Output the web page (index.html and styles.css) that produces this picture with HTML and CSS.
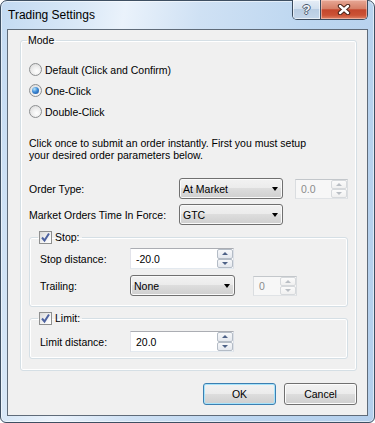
FILE: index.html
```html
<!DOCTYPE html>
<html lang="en">
<head>
    <meta charset="UTF-8">
    <meta name="viewport" content="width=device-width, initial-scale=1.0">
    <title>Trading Settings</title>
    <link rel="stylesheet" href="styles.css">
</head>
<body>
    <div class="window">
        <div class="titlebar">
            <span class="title">Trading Settings</span>
            <div class="caption-buttons">
                <span class="cap-btn help">?</span>
                <span class="cap-btn close">
                    <svg width="14" height="11" viewBox="0 0 14 11">
                        <path d="M3 2 L11 9 M11 2 L3 9" stroke="#4a2419" stroke-width="4.4" stroke-linecap="round"/>
                        <path d="M3 2 L11 9 M11 2 L3 9" stroke="#ffffff" stroke-width="2.4" stroke-linecap="round"/>
                    </svg>
                </span>
            </div>
        </div>

        <div class="client">
            <fieldset class="group mode">
                <legend>Mode</legend>
                <label class="radio"><span class="radio-box"></span>Default (Click and Confirm)</label>
                <label class="radio"><span class="radio-box checked"></span>One-Click</label>
                <label class="radio"><span class="radio-box"></span>Double-Click</label>

                <p class="desc">Click once to submit an order instantly. First you must setup<br>your desired order parameters below.</p>

                <div class="row first">
                    <span class="lbl lbl-wide">Order Type:</span>
                    <div class="combo">At Market<span class="arrow"></span></div>
                    <div class="spin disabled spin-price">
                        <span class="spin-value">0.0</span>
                        <span class="spin-btns"><span class="sb up"></span><span class="sb down"></span></span>
                    </div>
                </div>
                <div class="row">
                    <span class="lbl lbl-wide">Market Orders Time In Force:</span>
                    <div class="combo">GTC<span class="arrow"></span></div>
                </div>

                <fieldset class="group sub stop">
                    <legend><span class="check"><svg width="11" height="11" viewBox="0 0 11 11"><path d="M2 5.5 L4.5 8.5 L9 1.5" fill="none" stroke="#4d62a0" stroke-width="2"/></svg></span>Stop:</legend>
                    <div class="row">
                        <span class="lbl">Stop distance:</span>
                        <div class="spin">
                            <span class="spin-value">-20.0</span>
                            <span class="spin-btns"><span class="sb up"></span><span class="sb down"></span></span>
                        </div>
                    </div>
                    <div class="row">
                        <span class="lbl">Trailing:</span>
                        <div class="combo combo-trail">None<span class="arrow"></span></div>
                        <div class="spin disabled spin-trail">
                            <span class="spin-value">0</span>
                            <span class="spin-btns"><span class="sb up"></span><span class="sb down"></span></span>
                        </div>
                    </div>
                </fieldset>

                <fieldset class="group sub limit">
                    <legend><span class="check"><svg width="11" height="11" viewBox="0 0 11 11"><path d="M2 5.5 L4.5 8.5 L9 1.5" fill="none" stroke="#4d62a0" stroke-width="2"/></svg></span>Limit:</legend>
                    <div class="row">
                        <span class="lbl">Limit distance:</span>
                        <div class="spin">
                            <span class="spin-value">20.0</span>
                            <span class="spin-btns"><span class="sb up"></span><span class="sb down"></span></span>
                        </div>
                    </div>
                </fieldset>
            </fieldset>

            <div class="buttons">
                <button class="btn default">OK</button>
                <button class="btn">Cancel</button>
            </div>
        </div>
    </div>
</body>
</html>
```

FILE: styles.css
```css
body {
    margin: 0;
    background: #ffffff;
    font-family: "Liberation Sans", Arial, sans-serif;
    font-size: 10.5px;
    color: #000;
}
.window {
    box-sizing: border-box;
    width: 375px;
    height: 423px;
    display: flex;
    flex-direction: column;
    padding: 0 6px 6px 6px;
    border: 1px solid #3e4f62;
    border-radius: 7px 7px 6px 6px;
    background: linear-gradient(100deg, #c3daf2 0%, #d9e8f7 18%, #eaf2fb 28%, #cfe1f4 45%, #bcd6f0 70%, #b4cfec 100%);
    box-shadow: inset 0 0 0 1px rgba(255, 255, 255, 0.55);
}
.titlebar {
    height: 28px;
    flex: none;
    display: flex;
    justify-content: space-between;
    align-items: flex-start;
}
.title {
    font-size: 12px;
    line-height: 28px;
    padding-left: 1px;
    color: #000;
}
.caption-buttons {
    display: flex;
    margin-top: -1px;
    height: 19px;
    border: 1px solid #3b4b5e;
    border-top: none;
    border-radius: 0 0 5px 5px;
    overflow: hidden;
}
.cap-btn {
    display: flex;
    align-items: center;
    justify-content: center;
}
.help {
    width: 27px;
    border-right: 1px solid #3b4b5e;
    background: linear-gradient(#e6eef7 0%, #d3e0ee 45%, #b9cde3 50%, #c4d6ea 100%);
    box-shadow: inset 0 0 0 1px rgba(255, 255, 255, 0.6);
    color: #f4f7fb;
    font-weight: bold;
    font-size: 13px;
    text-shadow: 1px 0 #4a5a6d, -1px 0 #4a5a6d, 0 1px #4a5a6d, 0 -1px #4a5a6d;
}
.close {
    width: 46px;
    background: linear-gradient(#e7a896 0%, #d68068 45%, #c4472d 52%, #cb5235 80%, #de8468 100%);
    box-shadow: inset 0 0 0 1px rgba(255, 220, 210, 0.5);
}
.client {
    flex: 1;
    display: flex;
    flex-direction: column;
    background: #f0f0f0;
    border: 1px solid #5f6b79;
    padding: 3px 10px 0 12px;
}
.group {
    margin: 0;
    border: 1px solid #d5dfe5;
    border-radius: 3px;
    box-shadow: 0 0 0 1px #ffffff inset;
}
.group legend {
    line-height: 14px;
    padding: 0 2px 0 1px;
    margin-left: -2px;
    display: flex;
    align-items: center;
}
.mode {
    padding: 12px 8px 11px 8px;
}
.radio {
    display: flex;
    align-items: center;
    height: 21px;
}
.radio-box {
    box-sizing: border-box;
    width: 13px;
    height: 13px;
    margin-right: 3px;
    border-radius: 50%;
    border: 1px solid #8d8f91;
    background: radial-gradient(circle at 60% 65%, #ffffff 0%, #f0f0f0 40%, #d4d4d4 100%);
    display: flex;
    align-items: center;
    justify-content: center;
}
.radio-box.checked::after {
    content: "";
    width: 7px;
    height: 7px;
    border-radius: 50%;
    background: radial-gradient(circle at 35% 30%, #b6e4fb 0%, #3d8ad6 45%, #1b4c95 100%);
}
.desc {
    margin: 15px 0 0 0;
    line-height: 12px;
}
.row {
    display: flex;
    align-items: center;
    height: 21px;
    margin-top: 5px;
}
.row.first {
    margin-top: 17px;
}
.lbl {
    width: 90px;
    flex: none;
}
.lbl-wide {
    width: 150px;
}
.combo {
    box-sizing: border-box;
    width: 104px;
    height: 21px;
    display: flex;
    align-items: center;
    justify-content: space-between;
    padding: 0 4px 0 3px;
    border: 1px solid #707070;
    border-radius: 3px;
    background: linear-gradient(#f2f2f2 0%, #ebebeb 49%, #dddddd 50%, #cfcfcf 100%);
    box-shadow: inset 0 0 0 1px #fafafa;
}
.arrow {
    width: 0;
    height: 0;
    border-left: 3.5px solid transparent;
    border-right: 3.5px solid transparent;
    border-top: 4px solid #000;
}
.combo-trail {
    width: 105px;
}
.spin {
    box-sizing: border-box;
    width: 104px;
    height: 21px;
    display: flex;
    border: 1px solid #abadb3;
    border-color: #abadb3 #dbdfe6 #e3e9ef #e2e3ea;
    background: #ffffff;
}
.spin-value {
    flex: 1;
    display: flex;
    align-items: center;
    padding-left: 5px;
}
.spin-btns {
    width: 16px;
    display: flex;
    flex-direction: column;
}
.sb {
    flex: 1;
    box-sizing: border-box;
    border: 1px solid #b4bcc6;
    border-radius: 2px;
    background: linear-gradient(#f7f8fa, #e4e8ee);
    display: flex;
    align-items: center;
    justify-content: center;
}
.sb.up::after,
.sb.down::after {
    content: "";
    width: 0;
    height: 0;
    border-left: 3.5px solid transparent;
    border-right: 3.5px solid transparent;
}
.sb.up::after {
    border-bottom: 3px solid #4e6287;
}
.sb.down::after {
    border-top: 3px solid #4e6287;
}
.spin.disabled {
    background: #f7f7f7;
    border-color: #c3c7cb #dadde0 #e0e3e6 #dadde0;
    color: #8c8c8c;
}
.spin.disabled .sb {
    border-color: #d6d9dc;
    background: linear-gradient(#fbfbfb, #f0f0f0);
}
.spin.disabled .sb.up::after {
    border-bottom-color: #b9bec4;
}
.spin.disabled .sb.down::after {
    border-top-color: #b9bec4;
}
.spin-price {
    width: 53px;
    height: 20px;
    margin-left: 12px;
}
.spin-trail {
    width: 44px;
    height: 20px;
    margin-left: 18px;
}
.sub {
    padding: 4px 10px 10px 10px;
}
.stop {
    margin-top: 5px;
}
.stop .row:first-of-type {
    margin-top: 0;
}
.stop .row + .row {
    margin-top: 6px;
}
.limit {
    margin-top: 4px;
    padding-top: 6px;
    padding-bottom: 6px;
}
.limit .row {
    margin-top: 0;
}
.check {
    box-sizing: border-box;
    width: 13px;
    height: 13px;
    margin-right: 3px;
    border: 1px solid #8e8f8f;
    background: linear-gradient(135deg, #d9d9d9 0%, #f4f4f4 60%, #ffffff 100%);
    display: flex;
    align-items: center;
    justify-content: center;
}
.buttons {
    display: flex;
    justify-content: flex-end;
    gap: 8px;
    margin-top: 12px;
}
.btn {
    width: 73px;
    height: 22px;
    padding: 0;
    font-family: inherit;
    font-size: 10.5px;
    color: #000;
    border: 1px solid #707070;
    border-radius: 3px;
    background: linear-gradient(#f2f2f2 0%, #ebebeb 49%, #dddddd 50%, #cfcfcf 100%);
    box-shadow: inset 0 0 0 1px #fcfcfc;
    cursor: pointer;
}
.btn.default {
    border-color: #3c7fb1;
    box-shadow: inset 0 0 0 1px #a6e3fb;
}
```
